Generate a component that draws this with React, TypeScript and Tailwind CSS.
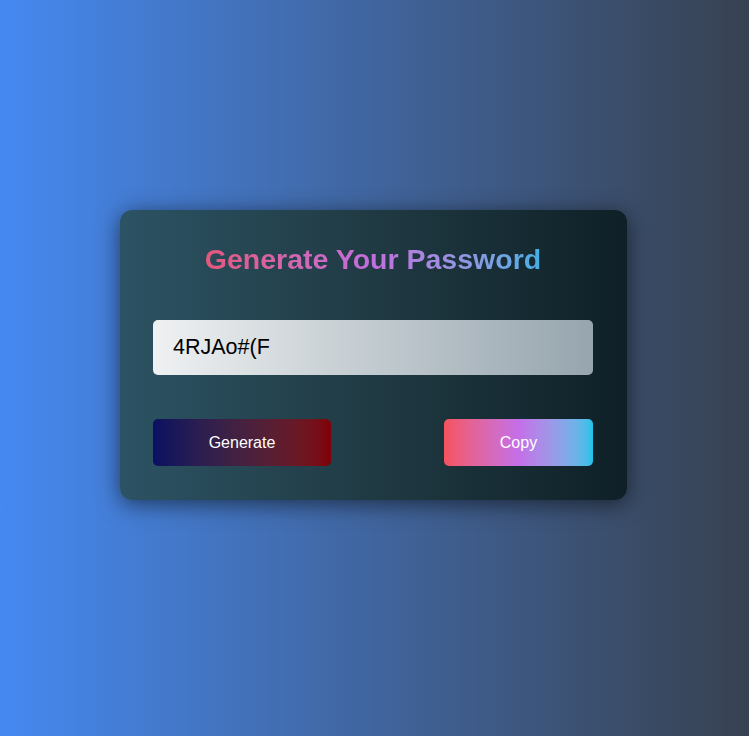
import { useState } from 'react';

const chars = 'ABCDEFGHIJKLMNOPQRSTUVWXYZabcdefghijklmnopqrstuvwxyz0123456789!@#$%^&*()';

function makePassword(len = 8) {
  let out = '';
  for (let i = 0; i < len; i++) out += chars[Math.floor(Math.random() * chars.length)];
  return out;
}

export default function App() {
  const [password, setPassword] = useState('4RJAo#(F');

  return (
    <div
      className="min-h-screen w-full flex justify-center pt-[210px] pr-[2px] bg-gradient-to-r from-[#4589f1] to-[#374151]"
      style={{ fontFamily: '"Liberation Sans", Arial, sans-serif' }}
    >
      <div className="w-[507px] h-[290px] rounded-xl pl-[33px] pr-[34px] pt-[33px] bg-gradient-to-r from-[#2c5364] via-[#203a43] to-[#0f2027] shadow-[0_4px_22px_rgba(0,0,0,0.55)]">
        <h1 className="text-center text-[28.5px] font-bold leading-[32px] bg-gradient-to-r from-[#e5577c] via-[#c26ede] to-[#43b0e4] bg-clip-text text-transparent w-fit mx-auto">
          Generate Your Password
        </h1>

        <input
          readOnly
          value={password}
          className="mt-[45px] block w-full h-[55px] rounded-[5px] pl-5 text-[21.5px] text-black outline-none bg-gradient-to-r from-[#eff1f2] to-[#96a5ae]"
        />

        <div className="mt-[44px] flex justify-between">
          <button
            onClick={() => setPassword(makePassword())}
            className="w-[178px] h-[47px] rounded-[5px] text-white text-base bg-gradient-to-r from-[#0a0f60] to-[#800006]"
          >
            Generate
          </button>
          <button
            onClick={() => navigator.clipboard?.writeText(password)}
            className="w-[149px] h-[47px] rounded-[5px] text-white text-base bg-gradient-to-r from-[#f5525d] via-[#c46ee8] to-[#1cc3e8]"
          >
            Copy
          </button>
        </div>
      </div>
    </div>
  );
}
